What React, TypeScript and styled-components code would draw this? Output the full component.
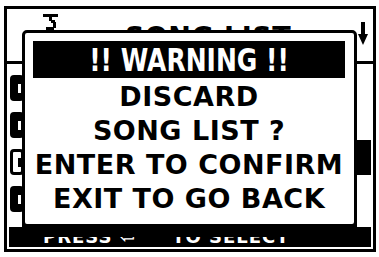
import React from "react";
import styled, { createGlobalStyle } from "styled-components";

const Global = createGlobalStyle`
  html, body { margin: 0; padding: 0; background: #fff; }
  * { box-sizing: border-box; }
`;

const LCD = `"DejaVu Sans", "Liberation Sans", sans-serif`;

const Root = styled.div`
  position: relative;
  width: 379px;
  height: 257px;
  background: #fff;
  overflow: hidden;
  padding: 6px 3px 5px 4px;
  font-family: ${LCD};
  font-weight: 700;
`;

const Screen = styled.div`
  height: 100%;
  border: 3px solid #000;
  display: flex;
  flex-direction: column;
`;

const Header = styled.div`
  height: 55px;
  flex: none;
  border-bottom: 3px solid #000;
  display: flex;
  align-items: flex-start;
`;

const SongIcon = styled.svg`
  flex: none;
  margin: 5px 0 0 36px;
`;

const Title = styled.div`
  flex: 1;
  text-align: center;
  padding-top: 14px;
  font-size: 27px;
  line-height: 27px;
  letter-spacing: 0.5px;
  color: #000;
`;

const DownArrow = styled.svg`
  flex: none;
  margin: 13px 5px 0 0;
`;

const Body = styled.div`
  flex: 1;
  display: flex;
  min-height: 0;
`;

const List = styled.div`
  flex: 1;
  display: flex;
  flex-direction: column;
  padding: 11px 0 0 3px;
  gap: 11px;
`;

const Row = styled.div`
  height: 26px;
  display: flex;
  align-items: center;
`;

const RowIcon = styled.div<{ $selected?: boolean }>`
  width: 14px;
  height: 26px;
  border-radius: 4px;
  position: relative;
  background: ${(p) => (p.$selected ? "#fff" : "#000")};
  border: 3px solid #000;
  &::after {
    content: "";
    position: absolute;
    left: 5px;
    top: 6px;
    width: 3px;
    height: 9px;
    background: ${(p) => (p.$selected ? "#000" : "#fff")};
  }
`;

const ScrollTrack = styled.div`
  width: 20px;
  flex: none;
  border-left: 3px solid #000;
  padding-right: 2px;
`;

const Thumb = styled.div`
  margin-top: 76px;
  height: 35px;
  background: #000;
`;

const Footer = styled.div`
  height: 20px;
  flex: none;
  margin: 0 2px 2px 2px;
  background: #000;
  color: #fff;
  font-size: 18px;
  line-height: 20px;
  letter-spacing: 1px;
  padding-left: 34px;
  white-space: pre;
  overflow: hidden;
`;

const Dialog = styled.div`
  position: absolute;
  left: 22px;
  top: 30px;
  width: 335px;
  height: 197px;
  background: #fff;
  border: 3px solid #000;
  border-radius: 5px;
  box-shadow: 0 10px 0 0 #000;
  padding: 8px 9px 0 8px;
  display: flex;
  flex-direction: column;
`;

const WarningBar = styled.div`
  height: 37px;
  flex: none;
  background: #000;
  color: #fff;
  display: flex;
  align-items: center;
  justify-content: center;
`;

const WarningText = styled.span`
  font-size: 25px;
  line-height: 25px;
  transform: scaleY(1.3);
  white-space: pre;
`;

const Lines = styled.div`
  display: flex;
  flex-direction: column;
  align-items: center;
  padding-top: 2px;
`;

const Line = styled.div`
  height: 34px;
  line-height: 34px;
  font-size: 27px;
  letter-spacing: 0.5px;
  color: #000;
  white-space: pre;
`;

export default function App() {
  const rows = [0, 1, 2, 3];
  return (
    <>
      <Global />
      <Root>
        <Screen>
          <Header>
            <SongIcon width="15" height="18" viewBox="0 0 15 18">
              <rect x="0" y="0" width="15" height="3" fill="#000" />
              <rect x="6" y="3" width="3" height="4" fill="#000" />
              <rect x="8" y="6" width="4" height="3" fill="#000" />
              <rect x="10" y="8" width="3" height="6" fill="#000" />
              <rect x="3" y="13" width="8" height="3" fill="#000" />
            </SongIcon>
            <Title>SONG LIST</Title>
            <DownArrow width="10" height="24" viewBox="0 0 10 24">
              <rect x="3" y="0" width="4" height="14" fill="#000" />
              <polygon points="0,12 10,12 5,23" fill="#000" />
            </DownArrow>
          </Header>
          <Body>
            <List>
              {rows.map((i) => (
                <Row key={i}>
                  <RowIcon $selected={i === 2} />
                </Row>
              ))}
            </List>
            <ScrollTrack>
              <Thumb />
            </ScrollTrack>
          </Body>
          <Footer>{"PRESS ⏎     TO SELECT"}</Footer>
        </Screen>
        <Dialog>
          <WarningBar>
            <WarningText>{"!! WARNING !!"}</WarningText>
          </WarningBar>
          <Lines>
            <Line>DISCARD</Line>
            <Line>SONG LIST ?</Line>
            <Line>ENTER TO CONFIRM</Line>
            <Line>EXIT TO GO BACK</Line>
          </Lines>
        </Dialog>
      </Root>
    </>
  );
}
